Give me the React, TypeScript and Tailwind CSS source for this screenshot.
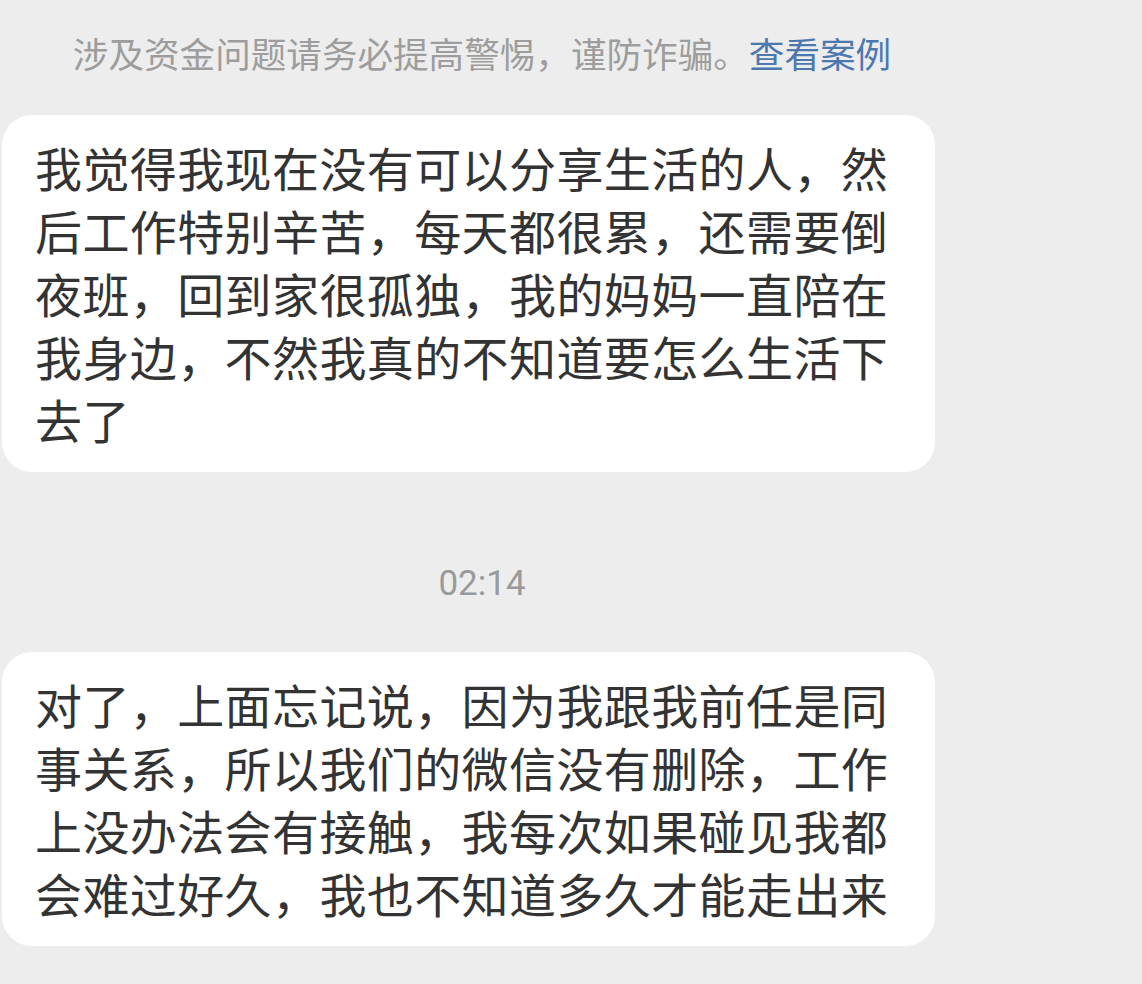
import React from "react";

const cjk = "font-['Noto_Sans_CJK_SC','Noto_Sans',sans-serif]";

function Bubble({ text, className = "" }: { text: string; className?: string }) {
  return (
    <div
      className={`w-[933px] rounded-[30px] bg-white pl-[33px] pr-[44px] ${className}`}
    >
      <p
        className={`${cjk} text-[47px] leading-[63px] tracking-[0.4px] text-[#333333] break-all`}
      >
        {text}
      </p>
    </div>
  );
}

export default function App() {
  return (
    <div className="min-h-[984px] w-full overflow-hidden bg-[#ededed] px-[2px]">
      <div className="w-[960px] pt-[29px] text-center">
        <p className={`${cjk} text-[35.6px] leading-[48px] text-[#9d9d9d]`}>
          涉及资金问题请务必提高警惕，谨防诈骗。
          <span className="text-[#4c78b0]">查看案例</span>
        </p>
      </div>

      <Bubble
        className="mt-[38px] pt-[20px] pb-[22px]"
        text="我觉得我现在没有可以分享生活的人，然后工作特别辛苦，每天都很累，还需要倒夜班，回到家很孤独，我的妈妈一直陪在我身边，不然我真的不知道要怎么生活下去了"
      />

      <div className="mt-[88px] w-[960px] text-center">
        <span className="font-['Roboto',sans-serif] text-[35px] leading-[48px] text-[#9a9a9a]">
          02:14
        </span>
      </div>

      <Bubble
        className="mt-[44px] pt-[20px] pb-[22px]"
        text="对了，上面忘记说，因为我跟我前任是同事关系，所以我们的微信没有删除，工作上没办法会有接触，我每次如果碰见我都会难过好久，我也不知道多久才能走出来"
      />
    </div>
  );
}
